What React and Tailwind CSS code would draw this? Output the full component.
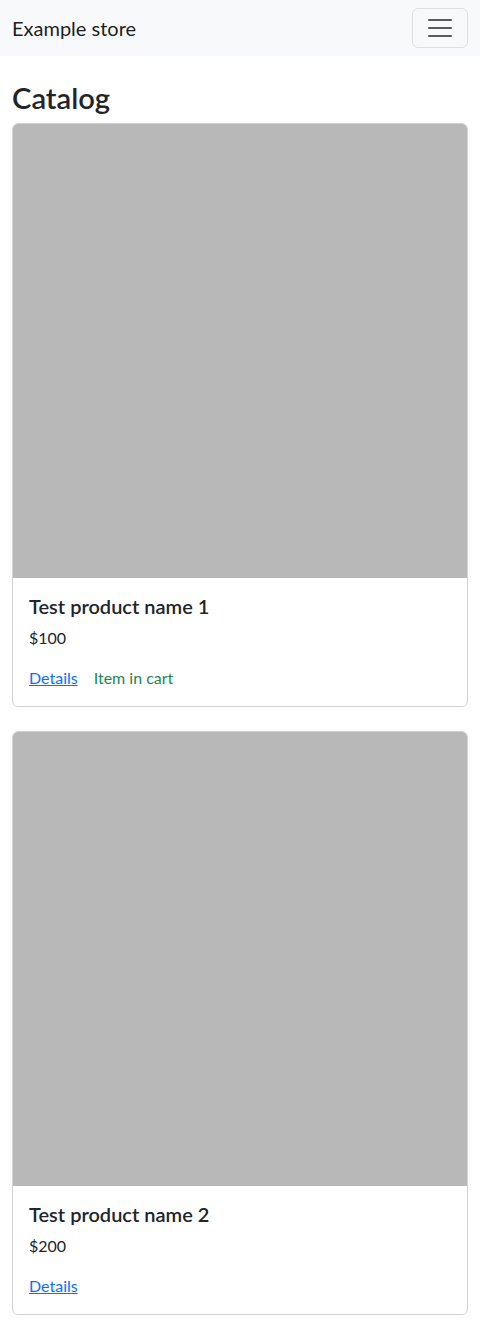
export default function App() {
  const products = [
    { id: 1, name: 'Test product name 1', price: 100, inCart: true },
    { id: 2, name: 'Test product name 2', price: 200, inCart: false },
  ];

  return (
    <div className="min-h-[1340px] bg-white text-[#212529] font-['Lato',sans-serif] text-base leading-6">
      <nav className="h-14 bg-[#f8f9fa] flex items-center justify-between px-3">
        <span className="text-[20px] leading-[30px] text-black/90">Example store</span>
        <button
          type="button"
          className="w-14 h-10 border border-black/10 rounded-md flex items-center justify-center"
        >
          <svg width="30" height="30" viewBox="0 0 30 30">
            <path
              d="M4 7h22M4 15h22M4 23h22"
              stroke="rgba(33,37,41,0.75)"
              strokeWidth="2"
              strokeLinecap="round"
            />
          </svg>
        </button>
      </nav>

      <main className="px-3 pt-6">
        <h1 className="text-[29.2px] leading-[35px] font-semibold mb-2">Catalog</h1>
        {products.map((p) => (
          <div key={p.id} className="mb-6 border border-black/[0.175] rounded-md overflow-hidden">
            <div className="w-full aspect-square bg-[#b8b8b8]" />
            <div className="p-4">
              <h5 className="text-[20px] leading-6 font-semibold mb-2">{p.name}</h5>
              <p className="mb-4">${p.price}</p>
              <div className="flex gap-4">
                <a href="#" className="text-[#0d6efd] underline">Details</a>
                {p.inCart && <span className="text-[#198754]">Item in cart</span>}
              </div>
            </div>
          </div>
        ))}
      </main>
    </div>
  );
}
